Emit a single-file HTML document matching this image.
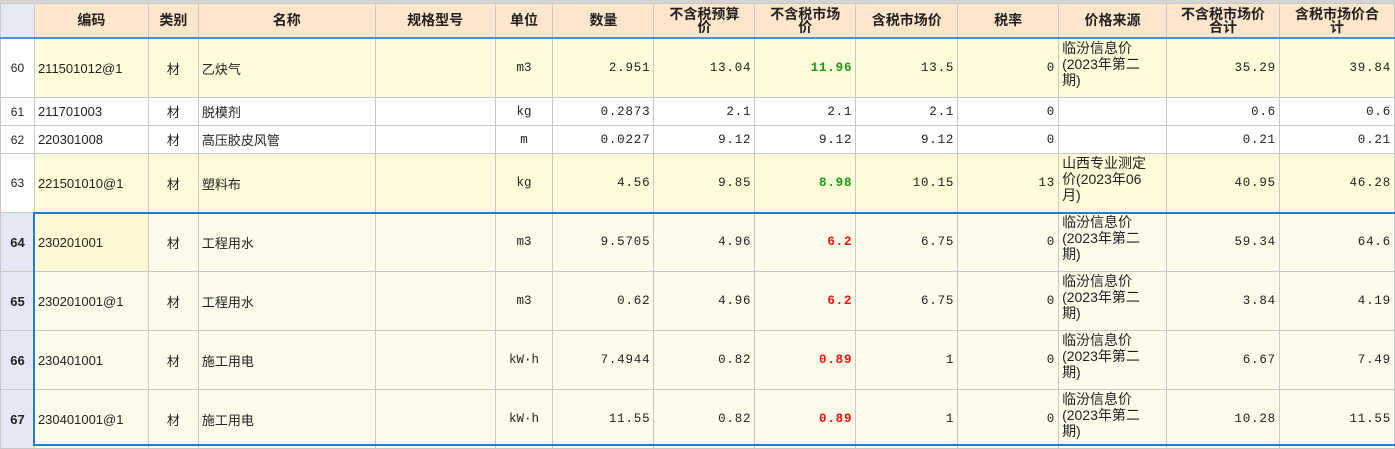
<!DOCTYPE html>
<html><head><meta charset="utf-8"><style>
body{margin:0;width:1395px;height:449px;overflow:hidden;background:#fff;font-family:"Liberation Sans","Noto Sans CJK SC",sans-serif;font-size:13px;color:#222}
.t{position:absolute;left:0;top:3px;border-collapse:collapse;table-layout:fixed}
.t td{border:1px solid #c8c8c8;padding:0 3px;overflow:hidden;white-space:nowrap}
.h td{background:#fde6c9;font-weight:bold;text-align:center;font-size:14px;line-height:13px;height:33px;border-bottom:2px solid #4a90e2}
.h td.rn{background:#e5e9f2}
.n{text-align:right;font-family:"Liberation Mono","Noto Sans CJK SC",monospace;font-size:12.5px;letter-spacing:0.8px}
.c{text-align:center}
.m{font-family:"Liberation Mono",monospace;font-size:12.5px;text-align:center}
.rn{text-align:center;font-size:12px;padding:0!important}
.y td{background:#fefbd8}
.w td{background:#fff}
.s td{background:#fcfbea}
.s td.rn{background:#e4e8f4;font-weight:bold;font-size:13px}
.src{white-space:nowrap;line-height:16px;font-size:14px;vertical-align:top;padding:1px 2px 0 3px!important}
.g{color:#1a9a1a;font-weight:bold}
.r{color:#f01010;font-weight:bold}
.tall td{height:57px}
.sh td{height:27px}
.sel{position:absolute;left:33px;top:212px;width:1362px;height:234px;border:2px solid #1f7ae8;border-right:none;box-sizing:border-box}
.top{position:absolute;left:0;top:0;width:1395px;height:3px;background:#d4d4d4}
</style></head><body>
<div class="top"></div>
<table class="t">
<colgroup><col style="width:34px"><col style="width:114px"><col style="width:50px"><col style="width:177px"><col style="width:120px"><col style="width:58px"><col style="width:101px"><col style="width:101px"><col style="width:101px"><col style="width:102px"><col style="width:101px"><col style="width:108px"><col style="width:113px"><col style="width:115px"></colgroup>
<tr class="h"><td class="rn"></td><td>编码</td><td>类别</td><td>名称</td><td>规格型号</td><td>单位</td><td>数量</td><td>不含税预算<br>价</td><td>不含税市场<br>价</td><td>含税市场价</td><td>税率</td><td>价格来源</td><td>不含税市场价<br>合计</td><td>含税市场价合<br>计</td></tr>
<tr class="y tall"><td class="rn" style="background:#fff">60</td><td>211501012@1</td><td class="c">材</td><td>乙炔气</td><td></td><td class="m">m3</td><td class="n">2.951</td><td class="n">13.04</td><td class="n g">11.96</td><td class="n">13.5</td><td class="n">0</td><td class="src">临汾信息价<br>(2023年第二<br>期)</td><td class="n">35.29</td><td class="n">39.84</td></tr>
<tr class="w sh"><td class="rn">61</td><td>211701003</td><td class="c">材</td><td>脱模剂</td><td></td><td class="m">kg</td><td class="n">0.2873</td><td class="n">2.1</td><td class="n">2.1</td><td class="n">2.1</td><td class="n">0</td><td></td><td class="n">0.6</td><td class="n">0.6</td></tr>
<tr class="w sh"><td class="rn">62</td><td>220301008</td><td class="c">材</td><td>高压胶皮风管</td><td></td><td class="m">m</td><td class="n">0.0227</td><td class="n">9.12</td><td class="n">9.12</td><td class="n">9.12</td><td class="n">0</td><td></td><td class="n">0.21</td><td class="n">0.21</td></tr>
<tr class="y tall"><td class="rn" style="background:#fff">63</td><td>221501010@1</td><td class="c">材</td><td>塑料布</td><td></td><td class="m">kg</td><td class="n">4.56</td><td class="n">9.85</td><td class="n g">8.98</td><td class="n">10.15</td><td class="n">13</td><td class="src">山西专业测定<br>价(2023年06<br>月)</td><td class="n">40.95</td><td class="n">46.28</td></tr>
<tr class="s tall"><td class="rn">64</td><td style="background:#fef8d3">230201001</td><td class="c">材</td><td>工程用水</td><td></td><td class="m">m3</td><td class="n">9.5705</td><td class="n">4.96</td><td class="n r">6.2</td><td class="n">6.75</td><td class="n">0</td><td class="src">临汾信息价<br>(2023年第二<br>期)</td><td class="n">59.34</td><td class="n">64.6</td></tr>
<tr class="s tall"><td class="rn">65</td><td>230201001@1</td><td class="c">材</td><td>工程用水</td><td></td><td class="m">m3</td><td class="n">0.62</td><td class="n">4.96</td><td class="n r">6.2</td><td class="n">6.75</td><td class="n">0</td><td class="src">临汾信息价<br>(2023年第二<br>期)</td><td class="n">3.84</td><td class="n">4.19</td></tr>
<tr class="s tall"><td class="rn">66</td><td>230401001</td><td class="c">材</td><td>施工用电</td><td></td><td class="m">kW·h</td><td class="n">7.4944</td><td class="n">0.82</td><td class="n r">0.89</td><td class="n">1</td><td class="n">0</td><td class="src">临汾信息价<br>(2023年第二<br>期)</td><td class="n">6.67</td><td class="n">7.49</td></tr>
<tr class="s tall"><td class="rn">67</td><td>230401001@1</td><td class="c">材</td><td>施工用电</td><td></td><td class="m">kW·h</td><td class="n">11.55</td><td class="n">0.82</td><td class="n r">0.89</td><td class="n">1</td><td class="n">0</td><td class="src">临汾信息价<br>(2023年第二<br>期)</td><td class="n">10.28</td><td class="n">11.55</td></tr>
</table>
<div class="sel"></div>
</body></html>
